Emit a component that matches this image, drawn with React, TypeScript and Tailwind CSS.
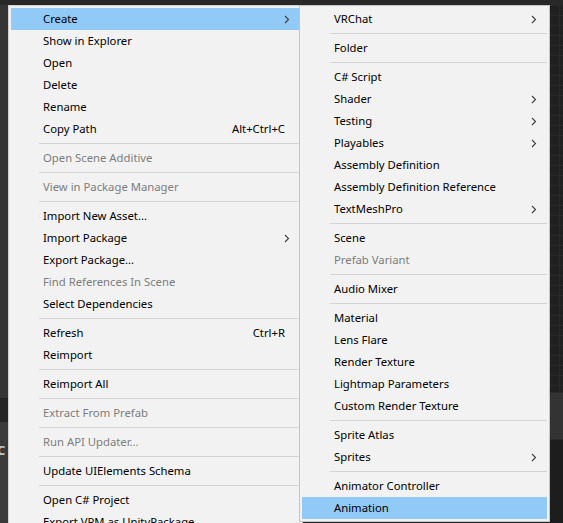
type Item =
  | { sep: true }
  | { label: string; disabled?: boolean; shortcut?: string; sub?: boolean; active?: boolean };

const mainItems: Item[] = [
  { label: 'Create', sub: true, active: true },
  { label: 'Show in Explorer' },
  { label: 'Open' },
  { label: 'Delete' },
  { label: 'Rename' },
  { label: 'Copy Path', shortcut: 'Alt+Ctrl+C' },
  { sep: true },
  { label: 'Open Scene Additive', disabled: true },
  { sep: true },
  { label: 'View in Package Manager', disabled: true },
  { sep: true },
  { label: 'Import New Asset...' },
  { label: 'Import Package', sub: true },
  { label: 'Export Package...' },
  { label: 'Find References In Scene', disabled: true },
  { label: 'Select Dependencies' },
  { sep: true },
  { label: 'Refresh', shortcut: 'Ctrl+R' },
  { label: 'Reimport' },
  { sep: true },
  { label: 'Reimport All' },
  { sep: true },
  { label: 'Extract From Prefab', disabled: true },
  { sep: true },
  { label: 'Run API Updater...', disabled: true },
  { sep: true },
  { label: 'Update UIElements Schema' },
  { sep: true },
  { label: 'Open C# Project' },
  { label: 'Export VPM as UnityPackage' },
];

const createItems: Item[] = [
  { label: 'VRChat', sub: true },
  { sep: true },
  { label: 'Folder' },
  { sep: true },
  { label: 'C# Script' },
  { label: 'Shader', sub: true },
  { label: 'Testing', sub: true },
  { label: 'Playables', sub: true },
  { label: 'Assembly Definition' },
  { label: 'Assembly Definition Reference' },
  { label: 'TextMeshPro', sub: true },
  { sep: true },
  { label: 'Scene' },
  { label: 'Prefab Variant', disabled: true },
  { sep: true },
  { label: 'Audio Mixer' },
  { sep: true },
  { label: 'Material' },
  { label: 'Lens Flare' },
  { label: 'Render Texture' },
  { label: 'Lightmap Parameters' },
  { label: 'Custom Render Texture' },
  { sep: true },
  { label: 'Sprite Atlas' },
  { label: 'Sprites', sub: true },
  { sep: true },
  { label: 'Animator Controller' },
  { label: 'Animation', active: true },
];

function Chevron() {
  return (
    <svg width="6" height="9" viewBox="0 0 6 9" className="shrink-0">
      <path d="M1 1 L4.5 4.5 L1 8" fill="none" stroke="#3c3c3c" strokeWidth="1.1" />
    </svg>
  );
}

function MenuList({ items }: { items: Item[] }) {
  return (
    <div className="flex flex-col">
      {items.map((it, i) => {
        if ('sep' in it) {
          return (
            <div key={i} className="h-[7px] flex items-center pl-[28px]">
              <div className="h-px w-full bg-[#d4d4d4]" />
            </div>
          );
        }
        return (
          <div
            key={i}
            className={`h-[22px] flex items-center pl-[32px] pr-[8px] pb-[1px] ${
              it.active ? 'bg-[#91c9f7]' : ''
            } ${it.disabled ? 'text-[#7d7d7d]' : 'text-[#000000]'}`}
          >
            <span className="flex-1 whitespace-nowrap">{it.label}</span>
            {it.shortcut && <span className="whitespace-nowrap mr-[7px]">{it.shortcut}</span>}
            {it.sub && <span className="mr-[2px] pt-[1px]"><Chevron /></span>}
          </div>
        );
      })}
    </div>
  );
}

export default function App() {
  return (
    <div
      className="relative w-[563px] h-[523px] overflow-hidden bg-[#262626] text-[11.3px] leading-none"
      style={{ fontFamily: '"Noto Sans", "Open Sans", sans-serif' }}
    >
      {/* editor background behind the menus */}
      <div className="flex flex-col h-full">
        <div className="h-[5px] shrink-0 bg-[#282828]" />
        <div className="flex flex-1">
          <div className="w-[10px] flex flex-col overflow-hidden">
            <div className="h-[393px] bg-[#353535]" />
            <div className="h-[24px] bg-[#242424]" />
            <div className="flex-1 bg-[#3a3a3a] pt-[22px]">
              <div className="text-[#c8c8c8] text-[13px] font-bold -ml-[3px]">C</div>
            </div>
          </div>
          <div className="flex-1" />
          <div className="w-[14px] flex flex-col bg-[#202020] bg-[linear-gradient(#2a2a2a_1px,transparent_1px),linear-gradient(90deg,#2a2a2a_1px,transparent_1px)] bg-[size:10px_10px]">
            <div className="h-[387px]" />
            <div className="h-[48px] bg-[#333333] border-y border-[#2a2a2a]" />
            <div className="flex-1 bg-[#1d1d1d]" />
          </div>
        </div>
      </div>

      {/* main context menu */}
      <div className="absolute left-[8px] top-[5px] w-[295px] h-[540px] bg-[#f2f2f2] border border-[#cfcfcf] p-[2px]">
        <MenuList items={mainItems} />
      </div>

      {/* Create submenu */}
      <div className="absolute left-[299px] top-[5px] w-[251px] bg-[#f2f2f2] border border-[#c4c4c4] p-[2px]">
        <MenuList items={createItems} />
      </div>
    </div>
  );
}
